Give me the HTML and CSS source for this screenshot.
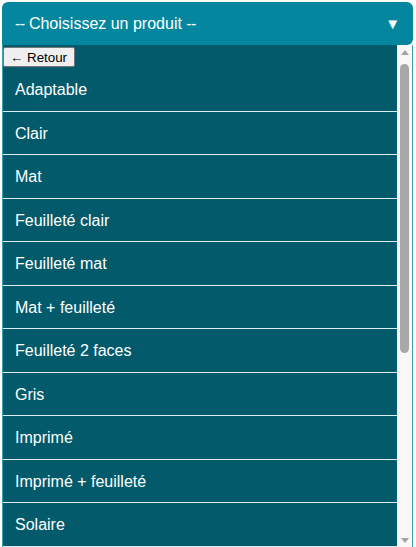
FILE: index.html
```html
<!DOCTYPE html>
<html lang="fr">
<head>
<meta charset="utf-8">
<title>Choisissez un produit</title>
<link rel="stylesheet" href="styles.css">
</head>
<body>
<div class="widget">
  <div class="select-head">
    <span class="placeholder"><span class="dash">--</span> Choisissez un produit <span class="dash">--</span></span>
    <span class="caret">▼</span>
  </div>
  <div class="panel">
    <div class="list">
      <button class="back" type="button">← Retour</button>
      <ul class="options">
        <li>Adaptable</li>
        <li>Clair</li>
        <li>Mat</li>
        <li>Feuilleté clair</li>
        <li>Feuilleté mat</li>
        <li>Mat + feuilleté</li>
        <li>Feuilleté 2 faces</li>
        <li>Gris</li>
        <li>Imprimé</li>
        <li>Imprimé + feuilleté</li>
        <li>Solaire</li>
      </ul>
    </div>
    <div class="scrollbar">
      <span class="arrow up"></span>
      <div class="track"><div class="thumb"></div></div>
      <span class="arrow down"></span>
    </div>
  </div>
</div>
</body>
</html>
```

FILE: styles.css
```css
html, body {
  margin: 0;
  padding: 0;
  background: #ffffff;
  font-family: "Liberation Sans", Arial, sans-serif;
}

.widget {
  margin: 2px 3px 0 2px;
  height: 545px;
  display: flex;
  flex-direction: column;
}

.select-head {
  height: 43px;
  flex: none;
  background: #04879e;
  border-radius: 6px 6px 6px 0;
  color: #ffffff;
  font-size: 16px;
  display: flex;
  align-items: center;
  justify-content: space-between;
  padding: 0 13px 0 13px;
  box-sizing: border-box;
}

.placeholder {
  padding-top: 1px;
}

.dash {
  letter-spacing: -0.6px;
}

.caret {
  font-size: 15px;
  line-height: 1;
}

.panel {
  flex: 1;
  min-height: 0;
  display: flex;
  border-left: 1px solid #3b9db0;
  border-right: 1px solid #3b9db0;
  overflow: hidden;
}

.list {
  flex: 1;
  min-width: 0;
  background: #035a6b;
  display: flex;
  flex-direction: column;
  align-items: flex-start;
  overflow: hidden;
}

.back {
  margin: 2px 0 1px 0;
  height: 20px;
  padding: 0 7px 0 6px;
  font-family: "Liberation Sans", Arial, sans-serif;
  font-size: 13.33px;
  color: #000000;
  background: #efefef;
  border: 1px solid #767676;
  border-radius: 2px;
}

.options {
  list-style: none;
  margin: 0;
  padding: 0;
  width: 100%;
}

.options li {
  color: #ffffff;
  font-size: 16px;
  line-height: 18.5px;
  padding: 13px 12px 11px 12px;
  border-bottom: 1px solid #dcedf1;
}

.scrollbar {
  width: 15px;
  flex: none;
  background: #f8f8f8;
  display: flex;
  flex-direction: column;
  align-items: center;
  padding: 5px 0 4px;
  box-sizing: border-box;
}

.arrow {
  width: 0;
  height: 0;
  border-left: 4px solid transparent;
  border-right: 4px solid transparent;
  flex: none;
}

.arrow.up {
  border-bottom: 5px solid #a3a3a3;
}

.arrow.down {
  border-top: 5px solid #a3a3a3;
}

.track {
  flex: 1;
  width: 100%;
  display: flex;
  justify-content: center;
  padding-top: 9px;
}

.thumb {
  width: 9px;
  height: 289px;
  background: #a8a8a8;
  border-radius: 5px;
}
```
